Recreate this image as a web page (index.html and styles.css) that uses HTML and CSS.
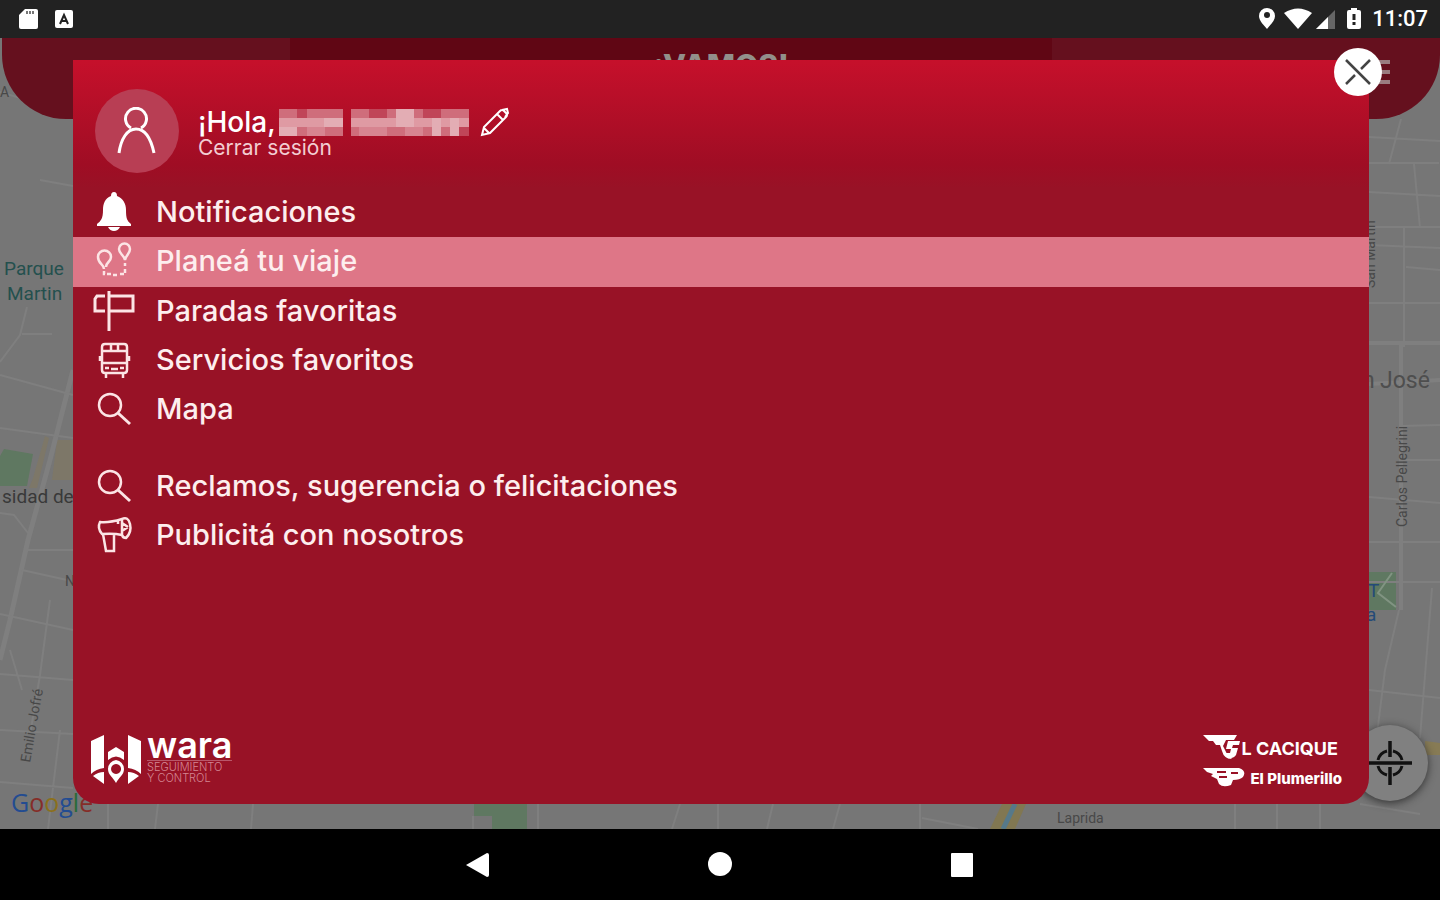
FILE: index.html
```html
<!DOCTYPE html>
<html lang="es">
<head>
<meta charset="utf-8">
<title>Menú</title>
<link rel="stylesheet" href="styles.css">
</head>
<body>
<div class="status">
  <div class="status-group">
    <svg width="22" height="24" viewBox="0 0 22 24"><path d="M8 2h11q2 0 2 2v16q0 2-2 2H4q-2 0-2-2V8z" fill="#fff"/><path d="M10 4v3M13 4v3M16 4v3" stroke="#777" stroke-width="2"/></svg>
    <svg width="20" height="22" viewBox="0 0 20 22"><rect x="1" y="2" width="18" height="18" rx="2" fill="#fff"/><path d="M6 16l4-9 4 9M8 13h4" fill="none" stroke="#222" stroke-width="2"/></svg>
  </div>
  <div class="status-group right">
    <svg width="18" height="24" viewBox="0 0 18 24"><path d="M9 1a8 8 0 0 1 8 8c0 5-5 9-8 13C6 18 1 14 1 9a8 8 0 0 1 8-8z" fill="#fff"/><circle cx="9" cy="8" r="3" fill="#222"/></svg>
    <svg width="28" height="24" viewBox="0 0 28 24"><path d="M0 6q14-9 28 0L14 22z" fill="#fff"/></svg>
    <svg class="signal" width="20" height="24" viewBox="0 0 20 24"><path d="M20 3v19H1z" fill="#666"/><path d="M13 10v12H1z" fill="#fff"/></svg>
    <svg class="battery" width="16" height="24" viewBox="0 0 16 24"><path d="M5 1h6v2h2q2 0 2 2v15q0 2-2 2H3q-2 0-2-2V5q0-2 2-2h2z" fill="#fff"/><path d="M8 7v6M8 15v3" stroke="#222" stroke-width="3"/></svg>
    <time>11:07</time>
  </div>
</div>

<main class="stage">
  <svg class="map" viewBox="0 38 1440 791" preserveAspectRatio="none">
    <rect y="38" width="1440" height="791" fill="#767676"/>
    <path d="M4 449l29 5-6 32H0v-30zM1369 541M1369 572h27v38h-27zM474 804h53v25h-35v-13h-18z" fill="#5f7861"/>
    <path d="M45 436l-12 42 -4 10h8l12-50zM57 440h16v40H52z" fill="#7d7768"/>
    <path d="M1425 741l15 2v12h-15z" fill="#877b55"/>
    <path d="M1002 804h24l-11 25h-25z" fill="#817752"/>
    <path d="M1015 804l-12 25" stroke="#56798a" stroke-width="5"/>
    <g fill="none" stroke="#7f7f7f" stroke-width="2">
      <path d="M73 370L50 460 28 540 10 620 0 660" stroke-width="5"/>
      <path d="M0 92l73 22M40 180l33 6M27 307L20 335 0 362M22 334h30M0 375l73 20M0 428l73 10M0 513l14 2 14 18M28 550h45M22 570l45 10M0 614l73 16M50 600l-10 75-10 60M0 674l73 6M0 730l73 4M0 782l73 6M60 730l-12 99M10 650l12 40M108 804v25M158 804l-3 25M253 804l-2 25M473 816v13M538 804v25M680 804l-8 25M718 804v25M773 804l-6 25M840 804l-7 25M920 804v25M922 818l56 11M1235 804v25M1277 804v25M1320 804v25M1360 804l60 10"/>
      <path d="M1401 119l-12 45M1369 137l71 4M1369 163h70M1414 164l6 64M1369 192l71 4M1369 227h71M1404 227v120M1369 245l71 3M1406 267l34 3M1369 303h71M1401 426l39-1M1401 460h39M1369 497l71 6M1369 542h71M1369 582h71M1399 610l-14 60-10 80M1432 588l-12 150M1369 690l71 8"/>
      <path d="M1369 343h71M1369 384l71-4M1401 343v267" stroke-width="4"/>
      <path d="M1392 573l-14 20 18 14" stroke="#819482"/>
    </g>
    <g class="map-label">
      <text x="4" y="275" fill="#24504e">Parque</text>
      <text x="7" y="300" fill="#24504e">Martin</text>
      <text x="2" y="503" fill="#393939">sidad de</text>
      <text x="65" y="586" class="street">N</text>
      <text x="0" y="97" class="street">A</text>
      <text x="1380" y="388" class="district">José</text>
      <text x="1362" y="388" class="district">n</text>
      <text x="1368" y="597" class="stop">T</text>
      <text x="1366" y="621" class="stop">a</text>
      <text x="1057" y="823" class="street">Laprida</text>
      <text transform="translate(30 763) rotate(-80)" class="street">Emilio Jofré</text>
      <text transform="translate(1407 527) rotate(-90)" class="street">Carlos Pellegrini</text>
      <text transform="translate(1375 288) rotate(-90)" class="street">San Martín</text>
    </g>
  </svg>

  <header class="banner">
    <span class="banner-title">¡VAMOS!</span>
    <span class="banner-menu"><i></i><i></i><i></i></span>
  </header>

  <span class="google"><b class="g-blue">G</b><b class="g-red">o</b><b class="g-yellow">o</b><b class="g-blue">g</b><b class="g-green">l</b><b class="g-red">e</b></span>

  <button class="locate" aria-label="Mi ubicación">
    <svg width="44" height="44" viewBox="0 0 44 44" fill="none" stroke="#111"><path d="M19 10A12.500 12.500 0 0 0 10 19M25 10A12.500 12.500 0 0 1 34 19M34 25A12.500 12.500 0 0 1 25 34M19 34A12.500 12.500 0 0 1 10 25" stroke-width="3"/><path d="M22 0v16M22 26v18M0 22h44" stroke-width="3.500"/></svg>
  </button>

  <aside class="drawer">
    <button class="close" aria-label="Cerrar">
      <svg width="28" height="28" viewBox="0 0 28 28" fill="none" stroke="#444" stroke-width="2.500"><path d="M2 2l24 24M26 2l-9 9M11 17l-9 9"/></svg>
    </button>
    <div class="profile">
      <span class="avatar">
        <svg width="42" height="48" viewBox="0 0 42 48" fill="none" stroke="#fff" stroke-width="3"><path d="M15 21a10.500 10.500 0 1 1 10 0M3 46c2-14 8-24 17-24s15 10 18 24"/></svg>
      </span>
      <div class="who">
        <div class="hello">
          <span>¡Hola,</span>
          <svg class="redacted" width="190" height="27" viewBox="0 0 190 27" shape-rendering="crispEdges">
            <path d="M0 0h64v27H0zM72 0h118v27H72z" fill="#cf6d7b"/>
            <path d="M0 9h64v9H0zM72 9h118v9H72z" fill="#df9aa3"/>
            <path d="M0 18h18v9H0zM117 0h18v18h-18zM153 9h9v18h-9zM171 9h9v18h-9zM45 9h19v9H45z" fill="#e3adb4"/>
            <path d="M18 0h10v9H18zM90 0h18v9H90zM144 0h18v9h-18zM180 18h10v9h-10z" fill="#c04558"/>
            <path d="M28 18h18v9H28zM80 18h28v9H80zM126 18h18v9h-18z" fill="#d78490"/>
          </svg>
          <button class="edit" aria-label="Editar perfil">
            <svg width="30" height="30" viewBox="0 0 30 30" fill="none" stroke="#fff" stroke-width="2"><path d="M2 28l2-8L20 4q2-2 4 0l2 2q2 2 0 4L10 26zM17 7l6 6M22 3l5-1 1 4-3 4M4 21l5 5"/></svg>
          </button>
        </div>
        <a class="logout" href="#">Cerrar sesión</a>
      </div>
    </div>

    <nav class="menu">
      <a href="#"><svg viewBox="0 0 42 42"><path d="M21 1q3 0 3 4c6 2 9 8 9 14 0 8 1 11 5 14v2H4v-2c4-3 6-6 6-14 0-6 2-12 8-14q0-4 3-4zM15 36h12q-2 4-6 4t-6-4z" fill="#fff"/></svg>Notificaciones</a>
      <a href="#" class="active"><svg viewBox="0 0 42 42"><path d="M11 29c0-5-6-5-6-12a6.500 6.500 0 0 1 13 0c0 5-5 5-5 10M32 20c-1-5-6-6-6-11a5.500 5.500 0 0 1 11 0c0 5-4 6-5 11z"/><path d="M11 31v3h7M20 35h4M27 34h5v-6M32 26v-3" stroke-dasharray="4 2"/></svg>Planeá tu viaje</a>
      <a href="#"><svg viewBox="0 0 42 42"><path d="M16 1v40M16 6h24v15H16M12 6H4l-2 3v12h10" stroke-width="3"/></svg>Paradas favoritas</a>
      <a href="#"><svg viewBox="0 0 42 42"><path d="M12 5h19q3 0 3 3v23q0 3-3 3H12q-3 0-3-3V8q0-3 3-3zM9 12h25M18 5v6M25 5v6M9 24h25M12 29h4M27 29h4M18 30h7M13 35v4M30 35v4M7 17v5M36 17v5"/></svg>Servicios favoritos</a>
      <a href="#"><svg viewBox="0 0 42 42"><circle cx="17" cy="17" r="11"/><path d="M25 25l12 11" stroke-width="3"/></svg>Mapa</a>
      <a href="#" class="apart"><svg viewBox="0 0 42 42"><circle cx="17" cy="17" r="11"/><path d="M25 25l12 11" stroke-width="3"/></svg>Reclamos, sugerencia o felicitaciones</a>
      <a href="#"><svg viewBox="0 0 42 42"><path d="M7 8q9 1 22-3v16q-8-2-20-1-5-6-2-12zM29 5q6-3 8 5t-4 14q-3 0-4-3M10 20l3 17h8V21M29 9l6 4M29 17l6-4M25 6v4"/></svg>Publicitá con nosotros</a>
    </nav>

    <footer class="brands">
      <div class="wara">
        <svg width="50" height="50" viewBox="0 0 50 50" fill="#fff"><path d="M0 7L13 1v33Q5 35 0 40zM50 7L37 1v33q8 1 13 6zM2 42q5-4 11-4v12zM48 42q-5-4-11-4v12zM17 18l8-5 8 5v8q-8-7-16 0z"/><path fill-rule="evenodd" d="M25 26a9 9 0 0 1 8 9c0 6-5 8-8 14-3-6-8-8-8-14a9 9 0 0 1 8-9zm0 4a5 5 0 1 0 .1 0z"/></svg>
        <div class="wara-text"><strong>wara</strong><small><span>SEGUIMIENTO</span><span>Y CONTROL</span></small></div>
      </div>
      <div class="partners">
        <div class="cacique">
          <svg width="38" height="26" viewBox="0 0 38 26"><path d="M0 1h34l-3 5h-8l-3 6 4 8 5 5q-8 0-10-8l-2-6H13l-3-4H6z" fill="#fff"/><path d="M25 7h12l-1 4h-6l-1 3h6l-2 7q-3 4-9 3l-2-5h5l1-4h-5z" fill="#fff"/></svg>
          <span>L CACIQUE</span>
        </div>
        <div class="plumerillo">
          <svg width="43" height="20" viewBox="0 0 43 20"><path d="M0 1h36q8 3 4 9-3 3-10 3l-2 5q-8 3-12-1l-2-5-6-3 2-2-6-2z" fill="#fff"/><path d="M14 5h9M28 6h7M16 10h8" stroke="#981226" stroke-width="2"/></svg>
          <span>El Plumerillo</span>
        </div>
      </div>
    </footer>
  </aside>
</main>

<div class="system-nav">
  <button aria-label="Atrás"><svg width="24" height="26" viewBox="0 0 24 26"><path d="M0 13L21 1q2 0 2 2v20q0 2-2 2z" fill="#fff"/></svg></button>
  <button aria-label="Inicio"><svg width="24" height="26" viewBox="0 0 24 26"><circle cx="12" cy="12" r="12" fill="#fff"/></svg></button>
  <button aria-label="Recientes"><svg width="24" height="26" viewBox="0 0 24 26"><rect x="1" y="1" width="22" height="24" rx="1" fill="#fff"/></svg></button>
</div>
</body>
</html>
```

FILE: styles.css
```css
* { box-sizing: border-box; }
body {
  margin: 0;
  min-height: 100vh;
  display: grid;
  grid-template-rows: 38px 1fr 71px;
  background: #000;
  color: #fff;
  font-family: Inter, "Open Sans", sans-serif;
}
button { padding: 0; border: 0; background: none; color: inherit; font: inherit; }
a { color: inherit; text-decoration: none; }
svg { display: block; flex: none; }

.status {
  display: flex;
  justify-content: space-between;
  align-items: center;
  padding: 0 12px 0 17px;
  background: #222;
}
.status-group { display: flex; align-items: center; gap: 15px; }
.right { gap: 8px; }
.right .signal { margin-left: -5px; }
.right .battery { margin: 0 2px 0 3px; }
.status time { font: 500 22px/24px Roboto, sans-serif; }

.stage { position: relative; display: flex; padding: 22px 71px 25px 73px; overflow: hidden; }
.map { position: absolute; inset: 0; width: 100%; height: 100%; }
.map-label { font: 400 19px Roboto, sans-serif; }
.street { font-size: 14px; fill: #484848; }
.stop { fill: #244a78; }
.district { font-size: 23px; fill: #4e4e4e; }

.banner {
  position: absolute;
  inset: 0 0 auto 2px;
  height: 81px;
  border-radius: 0 0 64px 64px;
  background: linear-gradient(90deg, #65101e 20%, #600614 20%, #600614 73%, #65101e 73%);
}
.banner-title {
  position: absolute;
  top: 9px;
  left: 0;
  right: 0;
  text-align: center;
  font-size: 30px;
  line-height: 36px;
  font-weight: 800;
  color: #92908b;
}
.banner-menu { position: absolute; top: 22px; right: 50px; width: 22px; display: grid; gap: 6px; }
.banner-menu i { height: 4px; background: #9a7c80; }

.google { position: absolute; left: 11px; bottom: 13px; font: 25px/28px "Open Sans", sans-serif; }
.google b { font-weight: 500; }
.g-blue { color: #234c91; }
.g-red { color: #852d28; }
.g-yellow { color: #8b701b; }
.g-green { color: #286b38; }

.locate {
  position: absolute;
  right: 12px;
  bottom: 28px;
  width: 76px;
  height: 76px;
  display: grid;
  place-items: center;
  border-radius: 50%;
  background: #808080;
  box-shadow: 0 2px 8px #333;
}

.drawer {
  position: relative;
  flex: 1;
  display: flex;
  flex-direction: column;
  border-radius: 0 0 26px 26px;
  background: #981226;
}
.close {
  position: absolute;
  top: -12px;
  right: -13px;
  width: 48px;
  height: 48px;
  display: grid;
  place-items: center;
  border-radius: 50%;
  background: #fff;
}
.profile {
  height: 128px;
  display: flex;
  align-items: center;
  gap: 19px;
  padding: 14px 22px 0;
  background: linear-gradient(#c6102b, #9f0d24 82%, #981226);
}
.avatar {
  width: 84px;
  height: 84px;
  display: grid;
  place-items: center;
  border-radius: 50%;
  background: #b83e54;
}
.who { padding-top: 4px; }
.hello { display: flex; align-items: center; gap: 3px; font-size: 28px; line-height: 28px; font-weight: 500; }
.edit { margin-left: 8px; }
.logout { display: block; font-size: 21px; line-height: 22px; font-weight: 400; color: #f3cdd2; }

.menu { display: flex; flex-direction: column; }
.menu a {
  height: 49px;
  display: flex;
  align-items: center;
  gap: 21px;
  padding-left: 20px;
  padding-bottom: 1px;
  font-size: 29px;
  line-height: 34px;
  font-weight: 500;
  color: #fdeeee;
}
.menu svg { width: 42px; height: 42px; fill: none; stroke: #fce4e5; stroke-width: 2.5; }
.menu a:first-child svg { stroke: none; }
.menu .active { height: 50px; padding-bottom: 3px; background: #de7687; }
.menu .apart { margin-top: 28px; }

.brands {
  margin-top: auto;
  display: flex;
  justify-content: space-between;
  align-items: flex-end;
  padding: 0 27px 15px 18px;
}
.wara { display: flex; align-items: flex-end; gap: 6px; padding-bottom: 5px; }
.wara-text { display: grid; }
.wara-text strong { font-size: 36px; line-height: 30px; font-weight: 600; }
.wara-text small {
  display: grid;
  padding-top: 1px;
  border-top: 1px solid #b9576a;
  font-size: 11px;
  line-height: 11px;
  font-weight: 300;
  color: #d48592;
}
.partners { display: grid; gap: 3px; }
.cacique, .plumerillo { display: flex; align-items: center; }
.cacique { font-size: 18px; line-height: 26px; font-weight: 700; }
.cacique span { padding-top: 4px; }
.plumerillo { gap: 4px; font-size: 15px; line-height: 20px; font-weight: 800; }
.plumerillo span { padding-top: 4px; }

.system-nav { display: flex; justify-content: center; align-items: center; gap: 218px; background: #000; }
```
